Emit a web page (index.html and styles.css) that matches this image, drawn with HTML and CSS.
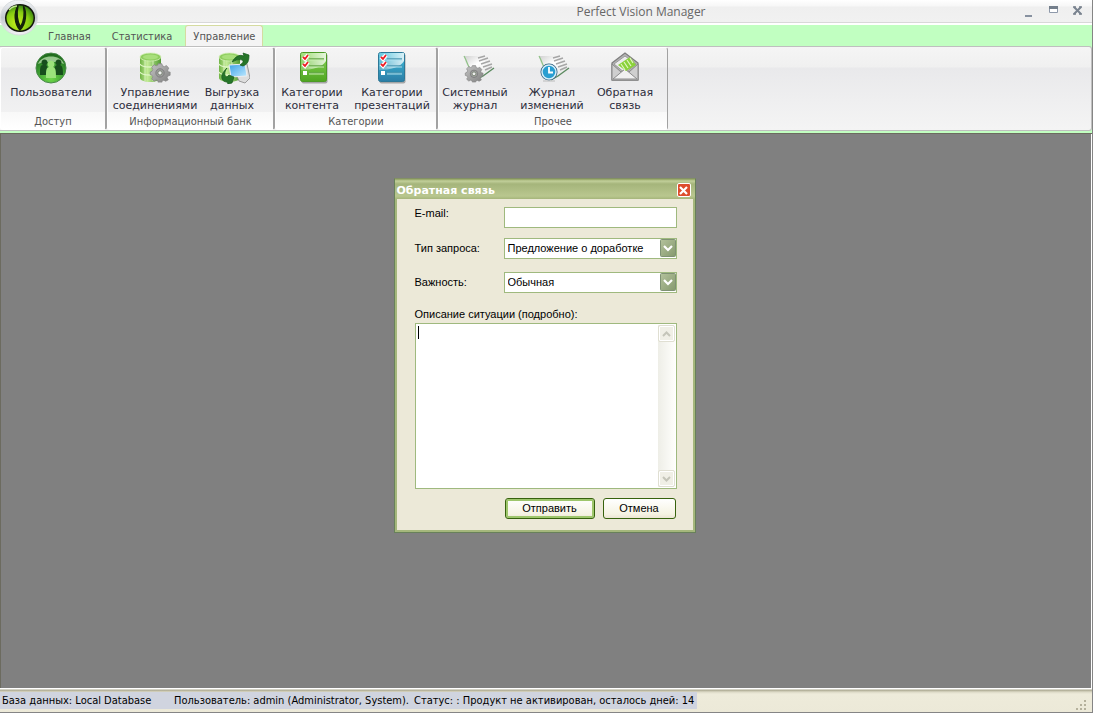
FILE: index.html
```html
<!DOCTYPE html>
<html lang="ru">
<head>
<meta charset="utf-8">
<title>Perfect Vision Manager</title>
<link rel="stylesheet" href="styles.css">
</head>
<body>
<svg class="defs" aria-hidden="true">
  <defs>
    <linearGradient id="db" x1="0" x2="1" y1="0" y2="0"><stop offset="0" stop-color="#6fb345"/><stop offset=".35" stop-color="#c4ec98"/><stop offset="1" stop-color="#4f9a30"/></linearGradient>
    <linearGradient id="list-green" x1="0" y1="0" x2="0" y2="1"><stop offset="0" stop-color="#8cd85a"/><stop offset="1" stop-color="#4fa521"/></linearGradient>
    <linearGradient id="list-blue" x1="0" y1="0" x2="0" y2="1"><stop offset="0" stop-color="#3fc0dd"/><stop offset="1" stop-color="#2b7da6"/></linearGradient>
    <linearGradient id="shine" x1="0" y1="0" x2="1" y2="0"><stop offset="0" stop-color="#fff" stop-opacity=".2"/><stop offset="1" stop-color="#fff" stop-opacity=".8"/></linearGradient>
    <linearGradient id="paper" x1="0" y1="0" x2="1" y2="1"><stop offset="0" stop-color="#d0d0d0"/><stop offset=".4" stop-color="#fff"/><stop offset="1" stop-color="#dcdcdc"/></linearGradient>
    <linearGradient id="metal" x1="0" y1="0" x2="1" y2="1"><stop offset="0" stop-color="#c4c4c4"/><stop offset="1" stop-color="#808080"/></linearGradient>
    <linearGradient id="screen" x1="0" y1="0" x2="1" y2="1"><stop offset="0" stop-color="#3aa0e8"/><stop offset="1" stop-color="#bfeaff"/></linearGradient>
    <linearGradient id="drop" x1="0" y1="0" x2="1" y2="1"><stop offset="0" stop-color="#b4c29c"/><stop offset="1" stop-color="#85996e"/></linearGradient>
    <radialGradient id="ball" cx=".5" cy=".85" r=".8"><stop offset="0" stop-color="#6fd84a"/><stop offset=".6" stop-color="#3a9a30"/><stop offset="1" stop-color="#1f6a1c"/></radialGradient>
    <radialGradient id="eye" cx=".4" cy=".7" r=".75"><stop offset="0" stop-color="#c8f01c"/><stop offset=".6" stop-color="#86cc12"/><stop offset="1" stop-color="#2f7d10"/></radialGradient>
    <linearGradient id="rim" x1="0" y1="0" x2="0" y2="1"><stop offset="0" stop-color="#f4f6f8"/><stop offset=".5" stop-color="#c3c8ce"/><stop offset="1" stop-color="#f2f3f5"/></linearGradient>
    <g id="cylinder">
      <path d="M1 5v21c0 2.200 4.500 4 10 4s11-1.800 11-4V5z" fill="url(#db)"/>
      <path d="M1 12c1 2 5 3 10 3s10-1 11-3M1 20c1 2 5 3 10 3s10-1 11-3" fill="none" stroke="#ddf5c2" stroke-width="1.300"/>
      <path d="M6 8v21M14 9v20" stroke="#e2f7cc" stroke-width=".8"/>
      <ellipse cx="11.500" cy="5" rx="10.500" ry="4" fill="#8fce60" stroke="#d3efb5" stroke-width=".8"/>
      <ellipse cx="11.500" cy="5" rx="7.500" ry="2.500" fill="#a9df7c"/>
    </g>
    <g id="gear">
      <path d="M-2-9h4l.7 2.300 2.100.9L7-7l2.500 2.800-1.200 2.100.7 2.100h2v3.600l-2.400.7-.9 1.900L9 8.500 6.200 10l-2-1-2 .6V11h-4.400v-1.700l-2-.6-2.100 1.200L-9 7.500l1.300-2.100-.9-1.900-2-.6V0l2-.8.8-2L-9-5l2.600-3 2.200 1.200 1.800-.6z" fill="url(#metal)" stroke="#858585" stroke-width=".8"/>
      <circle r="4.500" cy="1" fill="#a0a0a0" stroke="#707070" stroke-width=".8"/><circle r="2.300" cy="1" fill="#eee" stroke="#5f6f58" stroke-width=".8"/>
    </g>
    <g id="report">
      <path d="M1 1h15l14 13-9 8-5-2-6 4C5 17 3 9 1 1z" fill="url(#paper)"/>
      <path d="M1 1c3 5 4 11 7 14" fill="none" stroke="#8fc286" stroke-width="1.200"/>
      <path d="M31 13 20 21l-7 4" fill="none" stroke="#5b8a60" stroke-width="1.400"/>
      <path d="M15 3l7-2M16 6l9-3M18 9l9-3M20 12l9-3M22 15l7-3" stroke="#a6a6a6" stroke-width="1.500"/>
    </g>
    <g id="ticks">
      <path d="M4 5l2 2L9 3M4 12l2 2 3-4" fill="none" stroke="#fff" stroke-width="4"/>
      <path d="M4 5l2 2L9 3M4 12l2 2 3-4" fill="none" stroke="#ee1c24" stroke-width="1.800"/>
      <rect x="4" y="19" width="4" height="4" fill="#fff"/>
    </g>
  </defs>
</svg>

<div class="window">
  <header class="titlebar">
    <h1 class="title">Perfect Vision Manager</h1>
    <div class="window-buttons">
      <button class="window-button" aria-label="Свернуть"><svg width="11" height="12"><path d="M1 9h7v2H1z" fill="#8791a0"/></svg></button>
      <button class="window-button" aria-label="Развернуть"><svg width="11" height="12"><path d="M1.500 1.500h8v5h-8z" fill="#fff" stroke="#8e99aa"/><path d="M1 0h9v3H1z" fill="#737e8b"/></svg></button>
      <button class="window-button" aria-label="Закрыть"><svg width="11" height="12"><path d="M2 1l7 7M9 1L2 8" stroke="#79838f" stroke-width="2"/><path d="M1 1h3M7 1h3M1 8h3M7 8h3" stroke="#79838f" stroke-width="1.500"/></svg></button>
    </div>
  </header>

  <button class="orb" aria-label="Меню программы">
    <svg width="38" height="36" viewBox="0 0 38 36">
      <ellipse cx="19" cy="17.500" rx="18.500" ry="17.500" fill="url(#rim)" stroke="#d9dcdf"/>
      <ellipse cx="20" cy="18" rx="15" ry="14" fill="#10160a"/>
      <ellipse cx="20" cy="18" rx="13.500" ry="12.500" fill="url(#eye)"/>
      <path d="M18 5.500c-4 7-4 18 2 24.500 6-6 7-17 3.500-24 1.500 8 .5 15-3 21-3.500-6-4-14-2.500-21.500z" fill="#14210a" stroke="#14210a" stroke-width="1.400"/>
      <path d="M9 10c3-3 6-4 8-4" stroke="#bfe890" stroke-width="1.500" fill="none"/>
    </svg>
  </button>

  <nav class="tabs">
    <a class="tab" href="#home">Главная</a>
    <a class="tab" href="#stats">Статистика</a>
    <a class="tab tab-active" href="#manage">Управление</a>
  </nav>

  <div class="ribbon">
    <section class="group group-access">
      <div class="tools">
        <button class="tool tool-xl">
          <svg width="32" height="32" viewBox="0 0 32 32"><circle cx="16" cy="16" r="15" fill="url(#ball)" stroke="#49894a"/><path d="M3 12C6 2 26 2 29 12c-7-3-19-3-26 0z" fill="#d1efc4" opacity=".65"/><path d="M5 23c0-7 0-10 3-10a3 3 0 1 1 3 0c2 1 2 4 2 10zM19 23c0-6 0-9 3-10a3 3 0 1 1 3 0c3 1 3 5 3 10z" fill="#174e1c"/><path d="M11 26c0-8 0-10 3-11a3.500 3.500 0 1 1 4 0c3 1 3 4 3 11z" fill="#9be37b"/></svg>
          <span>Пользователи</span>
        </button>
      </div>
      <h2 class="group-name">Доступ</h2>
    </section>
    <section class="group group-bank">
      <div class="tools">
        <button class="tool tool-lg">
          <svg width="32" height="32" viewBox="0 0 32 32"><use href="#cylinder"/><use href="#gear" transform="translate(21 20) scale(.92)"/></svg>
          <span>Управление<br>соединениями</span>
        </button>
        <button class="tool tool-sm">
          <svg width="36" height="32" viewBox="-4 0 36 32"><use href="#cylinder"/><path d="M14 13l15-1 3 14-5 5-6-2z" fill="#ddd" stroke="#888" stroke-width=".8"/><path d="M11 13l16-1 2 12-16 1z" fill="url(#screen)" stroke="#eee"/><path d="M14 10c3-5 7-8 12-6l-1-3 6 2c0 6-1 9-6 11l-3-1c3-2 4-4 2-5-3-1-6 0-10 2zM9 16c-3 4-3 8 0 9l2-2 5 2-2 6-4 1-1-2c-4 0-6-3-5-7 1-3 3-5 5-7z" fill="#267529" stroke="#165a1b" stroke-width=".7"/></svg>
          <span>Выгрузка<br>данных</span>
        </button>
      </div>
      <h2 class="group-name">Информационный банк</h2>
    </section>
    <section class="group group-category">
      <div class="tools">
        <button class="tool tool-sm">
          <svg width="36" height="32" viewBox="-4 0 36 32"><rect x="3.500" y="1.500" width="26" height="30" rx="2" fill="#777" opacity=".6"/><rect x="2.500" y=".5" width="26" height="29" rx="2" fill="url(#list-green)" stroke="#4b9a25"/><path d="M3 1h25v8C25 15 14 18 3 18z" fill="url(#shine)"/><path d="M11 7h15M11 14h15M11 21h15" stroke="#66a84a" stroke-width="1.500"/><path d="M11 8h15M11 15h15M11 22h15" stroke="#c8edb0"/><use href="#ticks" x="1"/></svg>
          <span>Категории<br>контента</span>
        </button>
        <button class="tool tool-md">
          <svg width="32" height="32" viewBox="0 0 32 32"><rect x="3.500" y="1.500" width="26" height="30" rx="2" fill="#777" opacity=".6"/><rect x="2.500" y=".5" width="26" height="29" rx="2" fill="url(#list-blue)" stroke="#2c7898"/><path d="M3 1h25v8C25 15 14 18 3 18z" fill="url(#shine)"/><path d="M11 7h15M11 14h15M11 21h15" stroke="#4c98b3" stroke-width="1.500"/><path d="M11 8h15M11 15h15M11 22h15" stroke="#aee0ee"/><use href="#ticks" x="1"/></svg>
          <span>Категории<br>презентаций</span>
        </button>
      </div>
      <h2 class="group-name">Категории</h2>
    </section>
    <section class="group group-other">
      <div class="tools">
        <button class="tool tool-sm">
          <svg width="40" height="32" viewBox="-8 0 40 32"><use href="#report" y="3"/><use href="#gear" transform="translate(11 21) scale(.82)"/></svg>
          <span>Системный<br>журнал</span>
        </button>
        <button class="tool tool-lg">
          <svg width="36" height="32" viewBox="-4 0 36 32"><use href="#report" y="3"/><circle cx="11" cy="20" r="8.500" fill="#285b7c"/><circle cx="11" cy="20" r="7" fill="#299ed1" stroke="#d7eff9" stroke-width="1.500"/><path d="M11 15v5.500h4" fill="none" stroke="#fff" stroke-width="1.800"/><path d="M5 29h12" stroke="#bbb"/></svg>
          <span>Журнал<br>изменений</span>
        </button>
        <button class="tool tool-xs">
          <svg width="32" height="32" viewBox="0 0 32 32"><path d="M3 11 16 1l13 10v17H3z" fill="#b4b4b4" stroke="#7e7e7e" stroke-width="1.300"/><path d="M5 12 16 4l11 8-11 9z" fill="#ececec" stroke="#999"/><path d="M3 12l9 8 4-2 4 2 9-8v16H3z" fill="#cfcfcf" stroke="#888"/><path d="M4 27l12-10 12 10z" fill="#f1f1f1" stroke="#8d8d8d"/><path d="M9 13 21 5l6 8-10 6z" fill="#8ad239"/><path d="M12 12l4 6M15 10l4 6M18 8l4 6M21 6l3 5" stroke="#e2f5c4" stroke-width="1.200"/></svg>
          <span>Обратная<br>связь</span>
        </button>
      </div>
      <h2 class="group-name">Прочее</h2>
    </section>
  </div>

  <main class="workspace">
    <form class="dialog" role="dialog" aria-labelledby="dialog-title">
      <div class="dialog-title">
        <h2 id="dialog-title">Обратная связь</h2>
        <button class="dialog-close" type="button" aria-label="Закрыть"><svg width="9" height="9"><path d="M1 1l7 7M8 1L1 8" stroke="#fff" stroke-width="2.200"/></svg></button>
      </div>
      <div class="dialog-body">
        <div class="field">
          <label for="email">E-mail:</label>
          <input class="box" id="email" type="text">
        </div>
        <div class="field">
          <label for="kind">Тип запроса:</label>
          <div class="combo">
            <select class="box" id="kind"><option>Предложение о доработке</option></select>
            <svg class="combo-arrow" width="16" height="18"><rect x=".5" y=".5" width="15" height="17" rx="1" fill="url(#drop)" stroke="#7f9274"/><path d="M4 7l4 4 4-4" fill="none" stroke="#fff" stroke-width="2.200"/></svg>
          </div>
        </div>
        <div class="field">
          <label for="priority">Важность:</label>
          <div class="combo">
            <select class="box" id="priority"><option>Обычная</option></select>
            <svg class="combo-arrow" width="16" height="18"><rect x=".5" y=".5" width="15" height="17" rx="1" fill="url(#drop)" stroke="#7f9274"/><path d="M4 7l4 4 4-4" fill="none" stroke="#fff" stroke-width="2.200"/></svg>
          </div>
        </div>
        <label class="area-label" for="details">Описание ситуации (подробно):</label>
        <div class="area">
          <span class="caret"></span>
          <textarea id="details"></textarea>
          <div class="scroll">
            <button class="scroll-button" type="button" aria-label="Вверх" disabled><svg width="9" height="6"><path d="M1 5l3.500-3.500L8 5" fill="none" stroke="#c5c5b9" stroke-width="2"/></svg></button>
            <button class="scroll-button" type="button" aria-label="Вниз" disabled><svg width="9" height="6"><path d="M1 1l3.500 3.500L8 1" fill="none" stroke="#c5c5b9" stroke-width="2"/></svg></button>
          </div>
        </div>
        <div class="actions">
          <button class="action action-main" type="submit">Отправить</button>
          <button class="action" type="button">Отмена</button>
        </div>
      </div>
    </form>
  </main>

  <footer class="status">
    <span class="status-item status-db">База данных: Local Database</span>
    <span class="status-item status-user">Пользователь: admin (Administrator, System).</span>
    <span class="status-item status-state">Статус: : Продукт не активирован, осталось дней: 14</span>
    <svg class="grip" width="12" height="12"><path d="M8 0h2v2H8zM4 4h2v2H4zM8 4h2v2H8zM0 8h2v2H0zM4 8h2v2H4zM8 8h2v2H8z" fill="#b5b19c"/></svg>
  </footer>
</div>
</body>
</html>
```
FILE: styles.css
```css
* { box-sizing: border-box; }
body { margin: 0; font-family: "DejaVu Sans Condensed", "DejaVu Sans", sans-serif; font-size: 11px; line-height: 13px; color: #000; }
h1, h2 { margin: 0; font-size: inherit; font-weight: normal; }
button, input, select, textarea { font: inherit; color: inherit; margin: 0; padding: 0; }
svg { display: block; flex: none; }
.defs { position: absolute; width: 0; height: 0; }

.window { position: relative; display: flex; flex-direction: column; min-height: 100vh; background: #c1ffc1; border-right: 1px solid #858585; border-bottom: 1px solid #858585; }
.titlebar { display: grid; grid-template-columns: 380px 1fr 190px; align-items: center; height: 25px; background: linear-gradient(#fff 0, #f7f7f7 6px, #efefef 7px, #f1f1f1 22px); border-bottom: 2px solid #fff; box-shadow: inset 0 -1px #d8d8d8; }
.title { grid-column: 2; text-align: center; font-family: "Open Sans", sans-serif; font-size: 12px; color: #666; }
.window-buttons { display: flex; justify-content: flex-end; gap: 13px; padding-right: 9px; }
.window-button { border: 0; background: none; height: 16px; }
.orb { position: absolute; left: 0; top: 0; border: 0; background: none; z-index: 2; }

.tabs { display: flex; gap: 5px; height: 21px; padding-left: 40px; }
.tab { padding: 4px 7px 0; color: #555; text-decoration: none; border: 1px solid transparent; border-bottom: 0; }
.tab-active { margin-bottom: -1px; background: #f4f4f4; border-color: #d5dba0; border-radius: 3px 3px 0 0; }

.ribbon { display: flex; height: 85px; background: linear-gradient(#f5f5f5 0, #f0f0f0 20px, #e9e9eb 21px, #f4f4f4 82px); border: 1px solid #bfbfbf; border-width: 1px 1px 1px 0; border-radius: 0 3px 3px 0; }
.group { display: flex; flex-direction: column; border: 1px solid #fff; border-right: 2px solid #a2a2a2; border-radius: 3px; }
.group-access { width: 107px; }
.group-bank { width: 168px; }
.group-category { width: 163px; }
.group-other { width: 230px; }
.group-other { border-right-width: 1px; }
.tools { display: flex; flex: 1; padding: 4px 3px 0; }
.tool { display: flex; flex: none; flex-direction: column; align-items: center; gap: 2px; border: 0; background: none; color: #2d2d3c; font-family: "DejaVu Sans", sans-serif; }
.tool span { white-space: nowrap; }
.tool-xs { width: 58px; }
.tool-sm { width: 66px; }
.tool-md { width: 86px; }
.tool-lg { width: 88px; }
.tool-xl { width: 94px; }
.group-category .tools { gap: 4px; }
.group-name { height: 17px; padding-top: 3px; background: linear-gradient(#f8f8f8, #fff); text-align: center; color: #555; }

.workspace { display: flex; flex: 1; justify-content: center; align-items: flex-start; margin-top: 2px; padding: 44px 4px 40px 0; background: #808080; border: 1px solid #6c6b5f; border-width: 1px 0 0 1px; box-shadow: inset -1px 0 #fff; }
.dialog { width: 302px; background: #ece9d8; border: 1px solid #68815a; border-top-color: #849264; box-shadow: inset 0 0 0 2px #a5b77c; font-family: "Liberation Sans", Arial, sans-serif; }
.dialog-title { display: flex; align-items: center; justify-content: space-between; height: 20px; padding: 2px 4px 0 2px; background: linear-gradient(#8fa05f 0, #c2cf9a 2px, #a5b57b 5px, #b9c78f 17px, #a5b57b 20px); color: #fff; }
.dialog-title h2 { font-weight: bold; font-family: "DejaVu Sans", sans-serif; }
.dialog-close { display: flex; align-items: center; justify-content: center; width: 14px; height: 14px; background: #dd4d2c; border: 1px solid #fff; border-radius: 2px; }
.dialog-body { display: flex; flex-direction: column; padding: 8px 18px 13px 20px; }
.field { display: grid; grid-template-columns: 89px 1fr; align-items: center; margin-bottom: 13px; }
.field:first-child { align-items: start; margin-bottom: 10px; }
.box { display: block; width: 100%; height: 21px; padding: 0 3px; background: #fff; border: 1px solid #9fb97e; border-radius: 0; appearance: none; outline: 0; }
.combo { position: relative; }
.combo-arrow { position: absolute; right: 1px; top: 1px; pointer-events: none; }
.area-label { margin: 2px 0; }
.area { position: relative; display: flex; height: 166px; background: #fff; border: 1px solid #9fb97e; }
.area textarea { flex: 1; min-width: 0; padding: 2px; border: 0; outline: 0; resize: none; background: none; }
.caret { position: absolute; left: 2px; top: 2px; width: 1px; height: 13px; background: #000; }
.scroll { display: flex; flex-direction: column; justify-content: space-between; width: 17px; margin: 1px; background: linear-gradient(90deg, #eeeee7, #fefefb); }
.scroll-button { display: flex; align-items: center; justify-content: center; width: 17px; height: 17px; background: #f0efe6; border: 1px solid #e0dfd2; border-radius: 2px; box-shadow: inset 0 0 0 1px #fff; }
.actions { display: flex; justify-content: flex-end; gap: 8px; padding: 9px 1px 0 0; }
.action { width: 73px; height: 21px; background: linear-gradient(#fff, #f5f3e2 80%, #ebe5d4); border: 1px solid #37620d; border-radius: 3px; }
.action-main { width: 90px; box-shadow: inset 0 0 0 2px #9ec66c; }

.status { display: flex; align-items: center; height: 24px; padding: 1px 4px 0 0; background: linear-gradient(#fff 0, #fff 1px, #aaa78f 2px, #dcd9c6 4px, #eeebda 6px, #ece9d8); }
.status-item { height: 17px; padding: 2px 2px 0; background: #d0d4df; white-space: nowrap; }
.status-db { width: 172px; }
.status-user { width: 240px; }
.status-state { width: 285px; }
.grip { margin-left: auto; align-self: flex-end; }
```
